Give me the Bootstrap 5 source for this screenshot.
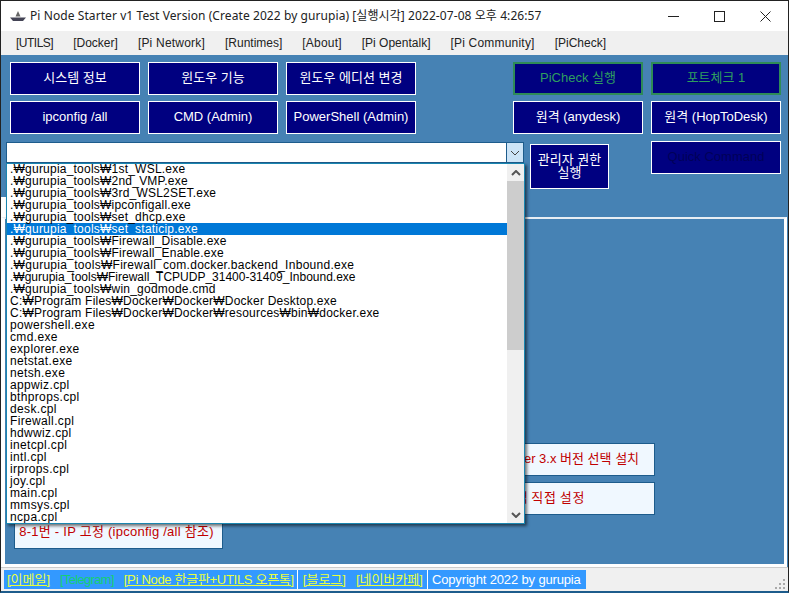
<!DOCTYPE html>
<html lang="ko">
<head>
<meta charset="utf-8">
<title>Pi Node Starter</title>
<link href="https://cdn.jsdelivr.net/npm/bootstrap@5.3.0/dist/css/bootstrap.min.css" rel="stylesheet">
<style>
html,body{height:100%;margin:0;background:#fff;overflow:hidden}
body{font-family:"Liberation Sans","Noto Sans CJK KR",sans-serif;font-size:12px;color:#000}
.win{width:789px;height:593px;border:1px solid #222;border-bottom:2px solid #1d5c8c;position:relative;display:flex;flex-direction:column}
.ttl{height:30px;background:#fff;font-family:"Noto Sans","Noto Sans CJK KR",sans-serif;font-size:12px;letter-spacing:.08px;color:#222;padding-left:9px;gap:4px}
.ctrls{margin-left:auto;gap:0}
.ctl{width:46px;height:30px}
.mnu{height:24px;background:#f0f0f0;padding-left:15px;gap:20px;font-size:12px;color:#222}
.lsa{letter-spacing:-.5px}
.lsb{letter-spacing:.2px}
.body-area{background:#4682b4;flex:1 1 auto;display:flex;flex-direction:column;padding:7px 7px 0 9px;min-height:0}
.nb{width:130px;height:33px;background:navy;border:1px solid #fff;color:#fff;display:flex;align-items:center;justify-content:center;font-size:13px;padding:0 0 2px;border-radius:0}
.nb.gr{border:2px solid #2e8b57;color:#2e9e5f}
.nb.qc{color:#000058;margin-top:-1px}
.gp{gap:8px}
.rw2{margin-top:6px}
.rw3{margin-top:8px;margin-left:-4px}
.cbx{width:518px;height:21px;background:#fff;border:1px solid #1d5c8c;display:flex;justify-content:flex-end}
.cbb{width:17px;background:#cce4f7;border-left:1px solid #1d5c8c;display:flex;align-items:center;justify-content:center}
.adm{width:79px;height:45px;margin:2px 42px 0 6px;background:navy;border:1px solid #fff;color:#fff;font-size:13px;line-height:13px;text-align:center;display:flex;align-items:center;justify-content:center;padding-bottom:2px}
.tabstrip{margin:8px 0 0 -9px;height:20px;flex:none}
.tabhead{width:100px;height:20px;background:#fff}
.pagex{margin:0 -6px 0 -9px;flex:1 1 auto;border:solid #fff;border-width:2px 3px 3px 4px;border-top-color:#e8eef4;padding:0 0 15px 9px;display:flex;align-items:flex-end;min-height:0}
.pcol{width:209px;display:flex;flex-direction:column;gap:6px}
.pcol2{margin-left:223px;margin-bottom:34px}
.rb{height:33px;background:#f0f8ff;border:1px solid #1d5c8c;color:#c00000;font-size:13px;letter-spacing:.25px;display:flex;align-items:center;justify-content:center;white-space:nowrap;padding-bottom:1px}
.rb.lt{padding-right:4px}
.rb.wd{letter-spacing:0;padding-left:10px}
.rb.wx{letter-spacing:.8px;word-spacing:-1.5px}
.stb{height:24px;background:#f0f0f0;border-top:1px solid #ccc;padding:2px 0 0 3px;position:relative;flex:none}
.si{background:#3399ff;height:19px;font-size:13px;display:flex;align-items:center;padding:0 3px;border-right:1px solid #fff}
.si.s2{padding:0 4px 0 5px}
.yl{color:#e8ff3c;text-decoration:underline;margin-right:10px}
.ylend{margin-right:0}
.tight{letter-spacing:-.3px}
.gl{color:#16d070;margin-right:10px;letter-spacing:-.7px}
.si.wt{color:#fff;padding:0 5px 0 4px;border-right:0;letter-spacing:-.15px}
.grip{position:absolute;right:2px;bottom:1px}
.dd{position:absolute;left:5px;top:162px;width:519px;height:361px;background:#fff;border:1px solid #1a86b0;box-shadow:2px 2px 3px rgba(0,0,0,.55);display:flex;overflow:hidden;z-index:5}
.dl{flex:1 1 auto;overflow:hidden;line-height:12px;font-size:12px;letter-spacing:.35px;white-space:nowrap;color:#000;margin-top:-1px}
.dl div{height:12px;padding-left:3px}
.dl .hit{background:#0078d7;color:#fff}
.dl .pw{letter-spacing:.22px}
.dl .lc{letter-spacing:.28px}
.dl .lg{letter-spacing:0}
.sbr{width:17px;background:#f0f0f0;position:relative;flex:none}
.up,.dn{height:17px;display:flex;align-items:center;justify-content:center}
.thm{background:#cdcdcd;height:169px}
.dn{position:absolute;bottom:0;left:0;right:0}
</style>
</head>
<body>
<div class="win">
  <div class="ttl d-flex align-items-center">
    <svg width="16" height="14" viewBox="0 0 16 14"><path d="M8 2 L10.5 7.5 H5.5 Z" fill="#666"/><path d="M0 8.5 H16 L13 12 H3 Z" fill="#445"/></svg>
    <span>Pi Node Starter v1 Test Version (Create 2022 by gurupia) [실행시각] 2022-07-08 오후 4:26:57</span>
    <div class="ctrls d-flex">
      <div class="ctl d-flex align-items-center justify-content-center"><svg width="11" height="11"><path d="M0 5.5H11" stroke="#222"/></svg></div>
      <div class="ctl d-flex align-items-center justify-content-center"><svg width="11" height="11"><rect x=".5" y=".5" width="10" height="10" fill="none" stroke="#222"/></svg></div>
      <div class="ctl d-flex align-items-center justify-content-center"><svg width="11" height="11"><path d="M.5 .5L10.5 10.5M10.5 .5L.5 10.5" stroke="#222"/></svg></div>
    </div>
  </div>
  <div class="mnu d-flex align-items-center">
    <span class="lsa">[UTILS]</span><span>[Docker]</span><span class="lsb">[Pi Network]</span><span>[Runtimes]</span><span class="lsb">[About]</span><span>[Pi Opentalk]</span><span class="lsb">[Pi Community]</span><span>[PiCheck]</span>
  </div>
  <div class="body-area">
    <div class="d-flex justify-content-between">
      <div class="d-flex gp"><div class="nb">시스템 정보</div><div class="nb">윈도우 기능</div><div class="nb">윈도우 에디션 변경</div></div>
      <div class="d-flex gp"><div class="nb gr">PiCheck 실행</div><div class="nb gr">포트체크 1</div></div>
    </div>
    <div class="d-flex justify-content-between rw2">
      <div class="d-flex gp"><div class="nb">ipconfig /all</div><div class="nb">CMD (Admin)</div><div class="nb">PowerShell (Admin)</div></div>
      <div class="d-flex gp"><div class="nb">원격 (anydesk)</div><div class="nb">원격 (HopToDesk)</div></div>
    </div>
    <div class="d-flex align-items-start rw3">
      <div class="cbx"><div class="cbb"><svg width="10" height="6"><path d="M1 1l4 4 4-4" fill="none" stroke="#444"/></svg></div></div>
      <div class="adm">관리자 권한<br>실행</div>
      <div class="nb qc">Quick Command</div>
    </div>
    <div class="tabstrip"><div class="tabhead"></div></div>
    <div class="pagex">
      <div class="pcol"><div class="rb lt">8-1번 - IP 고정 (ipconfig /all 참조)</div></div>
      <div class="pcol pcol2"><div class="rb wd">8-3 Docker 3.x 버전 선택 설치</div><div class="rb wx">벽 직접 설정</div></div>
    </div>
  </div>
  <div class="stb d-flex">
    <div class="si"><span class="yl">[이메일]</span><span class="gl">[Telegram]</span><span class="yl ylend tight">[Pi Node 한글판+UTILS 오픈톡]</span></div>
    <div class="si s2"><span class="yl">[블로그]</span><span class="yl ylend">[네이버카페]</span></div>
    <div class="si wt">Copyright 2022 by gurupia</div>
    <svg class="grip" width="12" height="12"><g fill="#aaa"><rect x="9" y="1" width="2" height="2"/><rect x="5" y="5" width="2" height="2"/><rect x="9" y="5" width="2" height="2"/><rect x="1" y="9" width="2" height="2"/><rect x="5" y="9" width="2" height="2"/><rect x="9" y="9" width="2" height="2"/></g></svg>
  </div>
  <div class="dd">
    <div class="dl">
      <div class="pw">.₩gurupia_tools₩1st_WSL.exe</div>
      <div class="pw">.₩gurupia_tools₩2nd_VMP.exe</div>
      <div class="pw">.₩gurupia_tools₩3rd_WSL2SET.exe</div>
      <div class="pw">.₩gurupia_tools₩ipconfigall.exe</div>
      <div class="pw">.₩gurupia_tools₩set_dhcp.exe</div>
      <div class="pw hit">.₩gurupia_tools₩set_staticip.exe</div>
      <div class="pw">.₩gurupia_tools₩Firewall_Disable.exe</div>
      <div class="pw">.₩gurupia_tools₩Firewall_Enable.exe</div>
      <div class="lc">.₩gurupia_tools₩Firewall_com.docker.backend_Inbound.exe</div>
      <div class="lg">.₩gurupia_tools₩Firewall_TCPUDP_31400-31409_Inbound.exe</div>
      <div class="pw">.₩gurupia_tools₩win_godmode.cmd</div>
      <div class="pw">C:₩Program Files₩Docker₩Docker₩Docker Desktop.exe</div>
      <div class="pw">C:₩Program Files₩Docker₩Docker₩resources₩bin₩docker.exe</div>
      <div>powershell.exe</div><div>cmd.exe</div><div>explorer.exe</div><div>netstat.exe</div><div>netsh.exe</div>
      <div>appwiz.cpl</div><div>bthprops.cpl</div><div>desk.cpl</div><div>Firewall.cpl</div><div>hdwwiz.cpl</div>
      <div>inetcpl.cpl</div><div>intl.cpl</div><div>irprops.cpl</div><div>joy.cpl</div><div>main.cpl</div><div>mmsys.cpl</div><div>ncpa.cpl</div>
    </div>
    <div class="sbr">
      <div class="up"><svg width="10" height="6"><path d="M1 5l4-4 4 4" fill="none" stroke="#555" stroke-width="2"/></svg></div>
      <div class="thm"></div>
      <div class="dn"><svg width="10" height="6"><path d="M1 1l4 4 4-4" fill="none" stroke="#555" stroke-width="2"/></svg></div>
    </div>
  </div>
</div>
<script src="https://cdn.jsdelivr.net/npm/bootstrap@5.3.0/dist/js/bootstrap.bundle.min.js"></script>
</body>
</html>
